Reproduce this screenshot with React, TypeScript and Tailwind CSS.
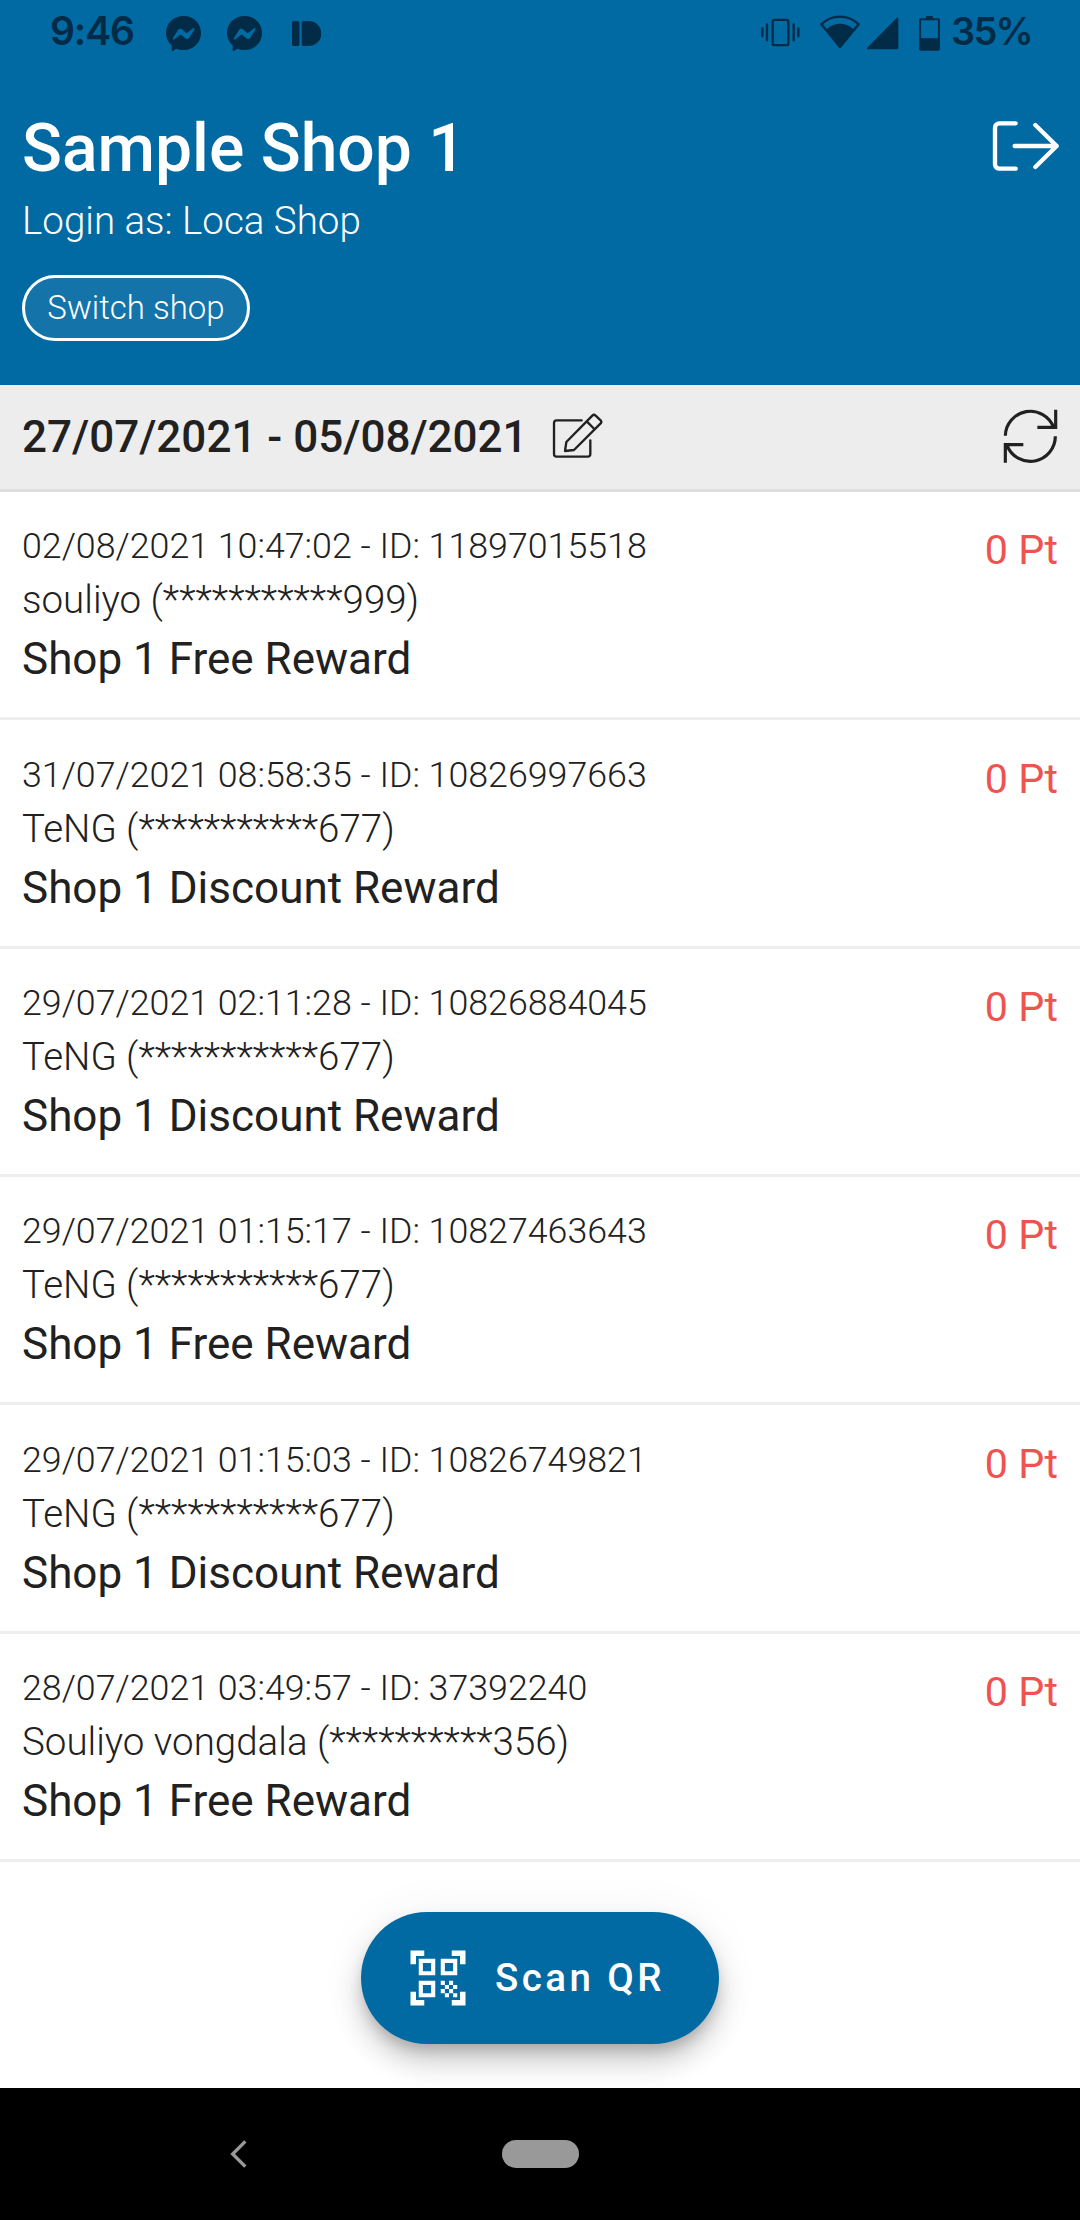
import React from "react";
import { MdQrCodeScanner } from "react-icons/md";

type Entry = { when: string; id: string; member: string; reward: string };

const entries: Entry[] = [
  { when: "02/08/2021 10:47:02", id: "11897015518", member: "souliyo (***********999)", reward: "Shop 1 Free Reward" },
  { when: "31/07/2021 08:58:35", id: "10826997663", member: "TeNG (***********677)", reward: "Shop 1 Discount Reward" },
  { when: "29/07/2021 02:11:28", id: "10826884045", member: "TeNG (***********677)", reward: "Shop 1 Discount Reward" },
  { when: "29/07/2021 01:15:17", id: "10827463643", member: "TeNG (***********677)", reward: "Shop 1 Free Reward" },
  { when: "29/07/2021 01:15:03", id: "10826749821", member: "TeNG (***********677)", reward: "Shop 1 Discount Reward" },
  { when: "28/07/2021 03:49:57", id: "37392240", member: "Souliyo vongdala (**********356)", reward: "Shop 1 Free Reward" },
];

function MessengerIcon() {
  return (
    <svg viewBox="0 0 105 105" className="h-[35px] w-[35px]">
      <path
        fill="currentColor"
        fillRule="evenodd"
        d="M53 0C82 0 105 22 105 51s-23 51-52 51c-9 0-16-2-23-4L21 105c-2 1-4 0-4-3V88C6 79 0 66 0 51 0 22 23 0 53 0ZM21 66c-2 3 1 6 4 4l17-13c1-1 3-1 4 0l12 10c4 3 9 2 12-2l15-24c2-3-1-6-4-4L64 50c-1 1-3 1-4 0L48 40c-4-3-9-2-12 2Z"
      />
    </svg>
  );
}

function PushIcon() {
  return (
    <svg viewBox="0 0 86 74" className="h-[25px] w-[29px]" fill="currentColor">
      <rect x="0" y="0" width="22" height="74" rx="5" />
      <path d="M34 0H50a37 37 0 0 1 0 74H34a5 5 0 0 1-5-5V5a5 5 0 0 1 5-5Z" />
    </svg>
  );
}

function VibrateIcon() {
  return (
    <svg viewBox="0 0 117 86" className="h-[29px] w-[39px]" fill="none" stroke="currentColor" strokeWidth="7">
      <rect x="35" y="5" width="47" height="76" rx="6" />
      <path strokeLinecap="round" d="M4 31V54M18 19V66M98 19V66M112 31V54" />
    </svg>
  );
}

function WifiIcon() {
  return (
    <svg viewBox="0 0 120 102" className="h-[34px] w-[40px]">
      <path
        fill="none"
        stroke="currentColor"
        strokeWidth="7"
        strokeLinejoin="round"
        d="M4 28C36-3 84-3 116 28L60 96Z"
      />
      <path fill="currentColor" d="M20 42C44 21 76 21 100 42L60 98Z" />
    </svg>
  );
}

function SignalIcon() {
  return (
    <svg viewBox="0 0 98 100" className="h-[33px] w-[33px]">
      <path
        fill="currentColor"
        stroke="currentColor"
        strokeWidth="6"
        strokeLinejoin="round"
        d="M94 5V95H5Z"
      />
    </svg>
  );
}

function BatteryIcon() {
  return (
    <svg viewBox="0 0 63 106" className="h-[35px] w-[21px]">
      <path fill="currentColor" d="M21 0H42V8H21Z" />
      <rect x="3" y="10" width="57" height="92" rx="3" fill="none" stroke="currentColor" strokeWidth="6" />
      <path fill="currentColor" d="M3 67H60V102H3Z" />
    </svg>
  );
}

function StatusBar() {
  return (
    <div className="flex h-16 items-start text-[#012b46]">
      <span className="ml-[50px] w-[116px] pt-[7px] font-['Inter'] text-[39px] leading-[48px] font-semibold tracking-[-1.1px]">
        9:46
      </span>
      <div className="flex gap-[26px] pt-4">
        <MessengerIcon />
        <MessengerIcon />
      </div>
      <div className="ml-[30px] pt-[21px]">
        <PushIcon />
      </div>
      <div className="ml-auto flex">
        <div className="pt-[18px]">
          <VibrateIcon />
        </div>
        <div className="ml-[20px] pt-[15px]">
          <WifiIcon />
        </div>
        <div className="ml-[6px] pt-[17px]">
          <SignalIcon />
        </div>
        <div className="ml-5 pt-4">
          <BatteryIcon />
        </div>
      </div>
      <span className="ml-[11px] w-[129px] pt-[7px] font-['Inter'] text-[38px] leading-[48px] font-semibold tracking-[-1.8px]">
        35%
      </span>
    </div>
  );
}

function LogoutIcon() {
  return (
    <svg
      viewBox="94 91 204 155"
      className="h-[51.7px] w-[68px]"
      fill="none"
      stroke="currentColor"
      strokeWidth="13"
      strokeLinecap="round"
      strokeLinejoin="round"
    >
      <path d="M165 101H116a13 13 0 0 0-13 13V224a13 13 0 0 0 13 13H165M162 169H288M224 106L288 169L224 232" />
    </svg>
  );
}

function EditIcon() {
  return (
    <svg
      viewBox="36 38 153 136"
      className="mb-[3px] h-[45.3px] w-[51px]"
      fill="none"
      stroke="currentColor"
      strokeWidth="7"
      strokeLinecap="round"
      strokeLinejoin="round"
    >
      <path d="M125 60H50a8 8 0 0 0-8 8V161a8 8 0 0 0 8 8H143a8 8 0 0 0 8-8V120" />
      <path d="M75 152L79 125L157 46Q162 41 167 46L182 60Q186 65 182 69L102 149ZM141 64L163 86" />
    </svg>
  );
}

function RefreshIcon() {
  return (
    <svg viewBox="130 88 164 164" className="h-[54.7px] w-[54.7px]" fill="none" stroke="currentColor" strokeWidth="9.5">
      <path d="M137 168A75 75 0 0 1 282 143M288 90V143H233" />
      <path d="M287 170A75 75 0 0 1 142 197M137 249V195H191" />
    </svg>
  );
}

function Header() {
  return (
    <header className="h-[385px] bg-[#026aa2] text-white">
      <StatusBar />
      <div className="flex items-start justify-between pt-[43px] pr-5 pl-[22px]">
        <div>
          <h1 className="text-[66px] leading-[84px] font-medium">Sample Shop 1</h1>
          <p className="text-[38.5px] leading-[60px] font-light">Login as: Loca Shop</p>
          <button className="mt-6 flex h-[66px] w-[228px] items-center justify-center rounded-full border-[3px] border-white bg-white/7 pb-0.5 text-[33px] leading-none font-light">
            Switch shop
          </button>
        </div>
        <div className="pt-[13px]">
          <LogoutIcon />
        </div>
      </div>
    </header>
  );
}

function DateBar() {
  return (
    <div className="flex h-[107px] items-center border-b-[3px] border-[#dedede] bg-[#ededed] px-[22px]">
      <span className="mr-6 text-[44px] font-medium">27/07/2021 - 05/08/2021</span>
      <EditIcon />
      <div className="mb-px ml-auto">
        <RefreshIcon />
      </div>
    </div>
  );
}

function EntryRow({ entry }: { entry: Entry }) {
  return (
    <li className="flex h-[228.33px] justify-between border-b-[3px] border-[#eeeeee] px-[22px] pt-[28.2px]">
      <div>
        <p className="text-[35.75px] leading-[52px] font-light">
          {entry.when} - ID: {entry.id}
        </p>
        <p className="text-[38.5px] leading-[55px] font-light">{entry.member}</p>
        <p className="text-[44px] leading-[64px]">{entry.reward}</p>
      </div>
      <span className="text-[41.25px] leading-[61px] text-[#ef5350]">0 Pt</span>
    </li>
  );
}

export default function App() {
  return (
    <div className="flex h-[2220px] w-[1080px] flex-col overflow-hidden bg-white font-['Roboto',sans-serif] text-[#212121]">
      <Header />
      <DateBar />
      <ul>
        {entries.map((entry) => (
          <EntryRow key={entry.id} entry={entry} />
        ))}
      </ul>
      <div className="flex flex-1 items-start justify-center pt-[50px]">
        <button className="flex h-[132px] w-[358px] items-center gap-6 rounded-full bg-[#026aa2] pl-[44px] text-[38.5px] font-medium tracking-[0.0892em] text-white shadow-[0_8px_14px_-3px_rgba(0,0,0,0.2),0_18px_28px_rgba(0,0,0,0.18),0_3px_50px_rgba(0,0,0,0.06)]">
          <MdQrCodeScanner className="h-[66px] w-[66px]" />
          Scan QR
        </button>
      </div>
      <nav className="relative flex h-[132px] items-center bg-black pl-[230px]">
        <svg viewBox="0 0 51 84" className="h-7 w-[17px]" fill="none" stroke="#999999" strokeWidth="10">
          <path d="M46 4L8 42L46 80" />
        </svg>
        <div className="ml-[255px] h-7 w-[77px] rounded-full bg-[#999999]" />
      </nav>
    </div>
  );
}
